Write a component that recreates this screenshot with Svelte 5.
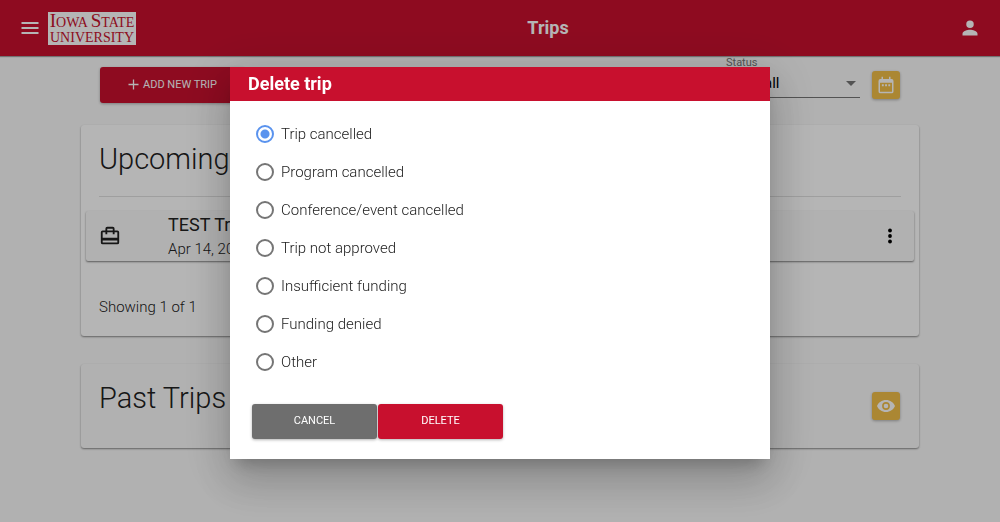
<script>
  const reasons = [
    'Trip cancelled',
    'Program cancelled',
    'Conference/event cancelled',
    'Trip not approved',
    'Insufficient funding',
    'Funding denied',
    'Other'
  ];
  let reason = $state('Trip cancelled');
  let status = $state('all');
</script>

<header class="topbar">
  <button class="plain" aria-label="Menu">
    <svg width="24" height="24" viewBox="0 0 24 24" fill="currentColor"><path d="M3.500 18h17v-2h-17zm0-5h17v-2h-17zm0-7v2h17V6z" /></svg>
  </button>
  <a class="logo" href="#home">
    <span class="line first"><b>I</b>OWA <b>S</b>TATE</span>
    <span class="line">UNIVERSITY</span>
  </a>
  <h1>Trips</h1>
  <button class="plain" aria-label="Account">
    <svg width="20" height="20" viewBox="0 0 24 24" fill="currentColor"><path d="M12 12a4.500 4.500 0 1 0 0-9 4.500 4.500 0 0 0 0 9zm0 2.200c-3 0-9 1.500-9 4.600V21h18v-2.200c0-3.100-6-4.600-9-4.600z" /></svg>
  </button>
</header>

<main>
  <div class="toolbar">
    <button class="btn add">
      <svg width="11" height="11" viewBox="0 0 11 11" stroke="currentColor" stroke-width="1.300"><path d="M5.500 .500v10M.500 5.500h10" /></svg>
      ADD NEW TRIP
    </button>
    <div class="filters">
      <div class="field">
        <label for="status">Status</label>
        <div class="selectwrap">
          <select id="status" bind:value={status}><option value="all">all</option></select>
          <svg width="10" height="5" viewBox="0 0 10 5" fill="#757575"><path d="M0 0h10L5 5z" /></svg>
        </div>
      </div>
      <button class="gold" aria-label="Calendar">
        <svg width="18" height="18" viewBox="0 0 24 24" fill="currentColor"><path d="M19.500 4H18V1h-2v3H8V1H6v3H4.500A2.500 2.500 0 0 0 2 6.500v14A2.500 2.500 0 0 0 4.500 23h15a2.500 2.500 0 0 0 2.500-2.500v-14A2.500 2.500 0 0 0 19.500 4zM20 21H4V9h16zM6.500 11h2.500v2.500H6.500zm4.300 0h2.500v2.500h-2.500zm4.300 0h2.500v2.500h-2.500z" /></svg>
      </button>
    </div>
  </div>

  <section class="card upcoming">
    <h2>Upcoming</h2>
    <hr />
    <article class="trip">
      <svg width="22" height="22" viewBox="0 0 24 24" fill="currentColor"><path d="M17 6V4a2 2 0 0 0-2-2H9a2 2 0 0 0-2 2v2H4a2 2 0 0 0-2 2v11a2 2 0 0 0 2 2h16a2 2 0 0 0 2-2V8a2 2 0 0 0-2-2zM9 4h6v2H9zm11 15H4v-2h16zm0-5H4V8h3v2h2V8h6v2h2V8h3z" /></svg>
      <div class="info">
        <strong>TEST Trip</strong>
        <span>Apr 14, 20</span>
      </div>
      <button class="plain more" aria-label="Trip actions">
        <svg width="4" height="16" viewBox="0 0 4 16" fill="currentColor"><circle cx="2" cy="2.500" r="1.900" /><circle cx="2" cy="8" r="1.900" /><circle cx="2" cy="13.500" r="1.900" /></svg>
      </button>
    </article>
    <p>Showing 1 of 1</p>
  </section>

  <section class="card past">
    <h2>Past Trips</h2>
    <button class="gold" aria-label="Show past trips">
      <svg width="18" height="18" viewBox="0 0 24 24" fill="currentColor"><path d="M12 4C6.500 4 2 7.400 0 12c2 4.600 6.500 8 12 8s10-3.400 12-8c-2-4.600-6.500-8-12-8zm0 13.200a5.200 5.200 0 1 1 0-10.400 5.200 5.200 0 0 1 0 10.400zm0-8.300a3.100 3.100 0 1 0 0 6.200 3.100 3.100 0 0 0 0-6.200z" /></svg>
    </button>
  </section>
</main>

<div class="scrim">
  <form class="dialog" role="dialog" aria-modal="true" aria-labelledby="dialog-title" onsubmit={(e) => e.preventDefault()}>
    <h2 id="dialog-title">Delete trip</h2>
    <div class="choices">
      {#each reasons as item}
        <label><input type="radio" name="reason" value={item} bind:group={reason} />{item}</label>
      {/each}
    </div>
    <div class="actions">
      <button type="button" class="btn grey">CANCEL</button>
      <button type="submit" class="btn">DELETE</button>
    </div>
  </form>
</div>

<style>
  :global(body) {
    background: #fafafa;
    color: #212121;
    font: 300 15px/20px Roboto, sans-serif;
  }
  button, select { font-family: inherit; margin: 0; border: 0; }
  svg { display: block; flex: none; }
  h1, h2, p { margin: 0; }
  .topbar {
    display: flex;
    align-items: center;
    gap: 6px;
    height: 56px;
    padding: 0 20px 0 18px;
    background: #c8102e;
    color: #fff;
    box-shadow: 0 1px 1px rgba(0, 0, 0, 0.35);
  }
  .plain { padding: 0; background: none; color: inherit; cursor: pointer; }
  .logo {
    display: flex;
    flex-direction: column;
    align-items: center;
    width: 88px;
    background: #fff;
    color: #c8102e;
    font: 14px/15px "Liberation Serif", serif;
    text-decoration: none;
    padding: 1px 0 0;
  }
  .line { white-space: nowrap; }
  .first { font-size: 14px; }
  .first b { font-size: 19px; font-weight: 400; }
  h1 { flex: 1; text-align: center; font-size: 18px; line-height: 24px; font-weight: 700; }
  main { max-width: 838px; margin: 0 auto; padding: 1px 0 24px; }
  .toolbar { display: flex; justify-content: space-between; padding: 0 19px; height: 68px; }
  .btn {
    display: flex;
    align-items: center;
    justify-content: center;
    gap: 4px;
    width: 125px;
    height: 35px;
    padding: 0 0 2px;
    border-radius: 3px;
    background: #c8102e;
    color: #fff;
    font-size: 11px;
    font-weight: 400;
    cursor: pointer;
    box-shadow: 0 1px 3px rgba(0, 0, 0, 0.3);
  }
  .add { width: 145px; height: 36px; margin-top: 10px; }
  .filters { display: flex; gap: 12px; }
  .field { width: 134px; }
  .field label { display: block; font-size: 11px; line-height: 12px; font-weight: 400; color: #757575; }
  .selectwrap { display: flex; align-items: center; height: 28px; padding-right: 4px; border-bottom: 1px solid #757575; }
  select {
    flex: 1;
    appearance: none;
    background: none;
    padding: 0 0 0 38px;
    font-size: 15px;
    font-weight: 400;
    color: #000;
  }
  .gold {
    display: flex;
    align-items: center;
    justify-content: center;
    width: 28px;
    height: 28px;
    padding: 0;
    border-radius: 3px;
    background: #f1be48;
    color: #fff;
    cursor: pointer;
    box-shadow: 0 1px 3px rgba(0, 0, 0, 0.3);
  }
  .filters .gold { margin-top: 14px; }
  .card { border-radius: 3px; box-shadow: 0 1px 2px rgba(0, 0, 0, 0.45); }
  .card h2 { font-size: 29px; line-height: 36px; font-weight: 300; }
  .upcoming { background: #fff; padding: 16px 5px 19px; }
  .upcoming h2, .upcoming p { padding: 0 13px; }
  hr { margin: 19px 13px 14px; border: 0; border-top: 1px solid #e0e0e0; }
  .trip {
    display: flex;
    align-items: center;
    height: 50px;
    padding: 0 22px 0 13px;
    background: #fafafa;
    border-radius: 2px;
    box-shadow: 0 1px 2px rgba(0, 0, 0, 0.5);
  }
  .info { display: flex; flex-direction: column; flex: 1; margin-left: 47px; padding-top: 2px; line-height: 24px; }
  .info strong { font-size: 18px; font-weight: 400; }
  .more { color: #000; }
  .upcoming p { margin-top: 36px; }
  .past { display: flex; align-items: flex-start; justify-content: space-between; margin-top: 28px; padding: 16px 19px 32px 18px; background: #fafafa; }
  .past .gold { margin-top: 12px; margin-bottom: -4px; }
  .scrim { position: fixed; inset: 0; padding: 67px 20px 20px; background: rgba(0, 0, 0, 0.29); }
  .dialog {
    max-width: 540px;
    margin: 0 auto;
    background: #fff;
    box-shadow: 0 11px 15px -7px rgba(0, 0, 0, 0.2), 0 24px 38px 3px rgba(0, 0, 0, 0.14), 0 9px 46px 8px rgba(0, 0, 0, 0.12);
  }
  .dialog h2 { padding: 0 18px; background: #c8102e; color: #fff; font-size: 18px; line-height: 34px; font-weight: 700; }
  .choices { display: grid; padding: 14px 26px 23px; }
  .choices label { display: flex; align-items: center; gap: 7px; height: 38px; }
  input {
    appearance: none;
    box-sizing: border-box;
    width: 18px;
    height: 18px;
    margin: 0;
    border: 2px solid #757575;
    border-radius: 50%;
  }
  input:checked { border-color: #5a93ee; background: radial-gradient(circle, #5a93ee 4px, #fff 5px); }
  .actions { display: flex; gap: 1px; padding: 0 22px 20px; }
  .grey { background: #6e6e6e; }
</style>
